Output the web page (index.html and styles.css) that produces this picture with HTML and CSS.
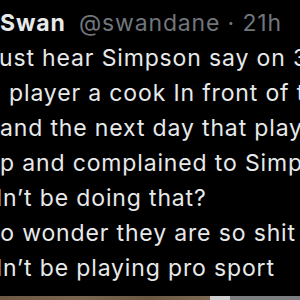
FILE: index.html
```html
<!DOCTYPE html>
<html lang="en">
<head>
  <meta charset="UTF-8" />
  <title>Tweet</title>
  <link rel="stylesheet" href="styles.css">
</head>
<body>
  <div class="tweet">
    <div class="tweet-head">
      <span class="name">Swan</span>
      <span class="handle">@swandane · 21h</span>
    </div>
    <div class="tweet-text">
      <div class="line"><span class="cut cut-j">J</span>ust hear Simpson say on 3AW</div>
      <div class="line"><span class="cut cut-a">a</span> player a cook In front of the</div>
      <div class="line">and the next day that player’s</div>
      <div class="line">p and complained to Simpson</div>
      <div class="line"><span class="cut cut-d">d</span>n’t be doing that?</div>
      <div class="line"><span class="cut cut-n">N</span>o wonder they are so shit</div>
      <div class="line"><span class="cut cut-d">d</span>n’t be playing pro sport</div>
    </div>
    <div class="media">
      <div class="media-photo"></div>
      <div class="media-edge"></div>
      <div class="media-grey"></div>
    </div>
  </div>
</body>
</html>
```

FILE: styles.css
```css
body {
  margin: 0;
  padding: 0;
  background: #000;
  color: #e7e9ea;
  font-family: Inter, "Noto Sans", sans-serif;
  overflow: hidden;
}

.tweet {
  width: 300px;
  height: 300px;
  overflow: hidden;
  padding-top: 6px;
  box-sizing: border-box;
}

.tweet-head,
.line {
  font-size: 23px;
  line-height: 35px;
  letter-spacing: 0.85px;
  white-space: nowrap;
}

.name {
  font-weight: 700;
  margin-right: 6px;
}

.handle {
  color: #71767b;
}

.cut {
  display: inline-block;
}

.cut-j { margin-left: -15px; }
.cut-a { margin-left: -12px; }
.cut-d { margin-left: -12px; }
.cut-n { margin-left: -18px; }

.media {
  display: flex;
  height: 14px;
  margin-top: 10px;
}

.media-photo {
  width: 210px;
  background: linear-gradient(90deg, #6e5a44, #7a6650 40%, #6b5843 70%, #7d6a55);
}

.media-edge {
  width: 20px;
  background: #cfcfcf;
}

.media-grey {
  flex: 1;
  background: #7c7e82;
}
```
